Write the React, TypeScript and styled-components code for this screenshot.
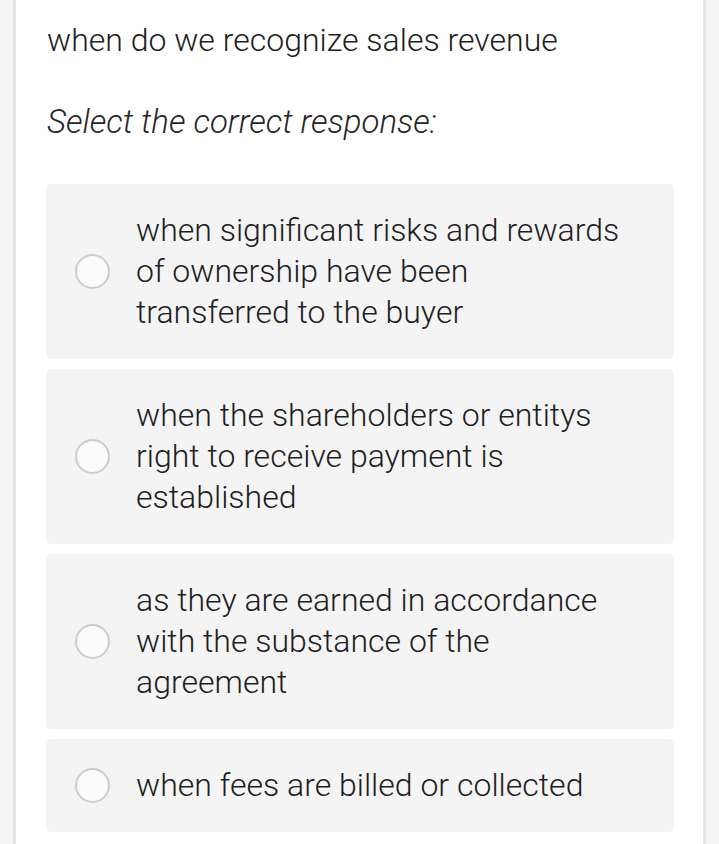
import React, { useState } from "react";
import styled, { createGlobalStyle } from "styled-components";

const GlobalStyle = createGlobalStyle`
  html, body {
    margin: 0;
    padding: 0;
    background: #f5f5f5;
  }
  body {
    font-family: Roboto, "Noto Sans", Arial, sans-serif;
    color: #222;
  }
`;

const Page = styled.div`
  padding: 0 13px;
  min-height: 844px;
`;

const Card = styled.div`
  background: #ffffff;
  border-left: 3px solid #e4e4e4;
  border-right: 3px solid #e4e4e4;
  min-height: 844px;
  padding: 20px 29px 12px 30px;
  box-sizing: border-box;
`;

const Question = styled.h1`
  margin: 0 0 0 1px;
  font-size: 32px;
  line-height: 41px;
  font-weight: 300;
  color: #1e1e1e;
`;

const Prompt = styled.p`
  margin: 40px 0 0 1px;
  font-size: 33px;
  line-height: 42px;
  font-style: italic;
  font-weight: 300;
  color: #262626;
`;

const Options = styled.div`
  margin-top: 41px;
  display: flex;
  flex-direction: column;
  gap: 10px;
`;

const Option = styled.label`
  display: flex;
  align-items: center;
  background: #f4f4f4;
  border-radius: 5px;
  padding: 26px 46px 26px 29px;
  cursor: pointer;
`;

const Radio = styled.span<{ checked: boolean }>`
  flex: none;
  width: 31px;
  height: 31px;
  border-radius: 50%;
  border: 2px solid #cccccc;
  background: #fbfbfb;
  margin-right: 26px;
  display: flex;
  align-items: center;
  justify-content: center;

  &::after {
    content: "";
    width: 17px;
    height: 17px;
    border-radius: 50%;
    background: ${(p) => (p.checked ? "#4a90e2" : "transparent")};
  }
`;

const OptionText = styled.span`
  font-size: 32px;
  line-height: 41px;
  font-weight: 300;
  color: #1e1e1e;
`;

const answers = [
  "when significant risks and rewards of ownership have been transferred to the buyer",
  "when the shareholders or entitys right to receive payment is established",
  "as they are earned in accordance with the substance of the agreement",
  "when fees are billed or collected",
];

export default function App() {
  const [selected, setSelected] = useState<number | null>(null);

  return (
    <>
      <GlobalStyle />
      <Page>
        <Card>
          <Question>when do we recognize sales revenue</Question>
          <Prompt>Select the correct response:</Prompt>
          <Options>
            {answers.map((answer, index) => (
              <Option key={index} onClick={() => setSelected(index)}>
                <Radio checked={selected === index} />
                <OptionText>{answer}</OptionText>
              </Option>
            ))}
          </Options>
        </Card>
      </Page>
    </>
  );
}
